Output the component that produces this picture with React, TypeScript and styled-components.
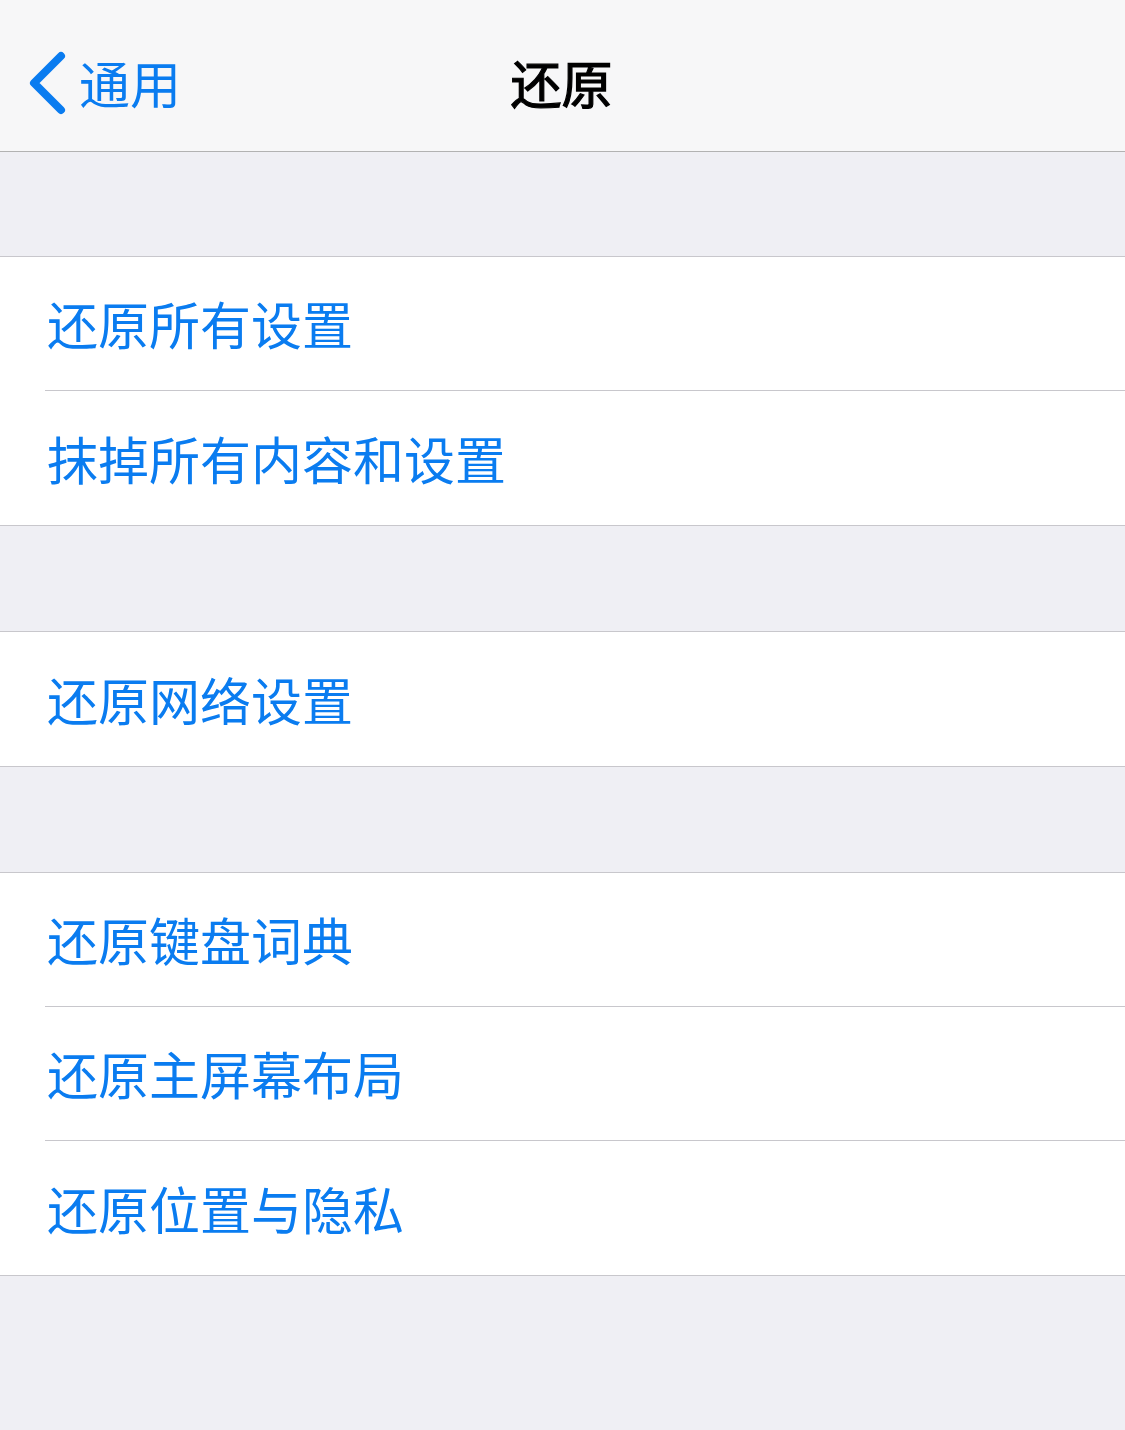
import { createGlobalStyle, styled } from 'styled-components'

const GlobalStyle = createGlobalStyle`
  html, body {
    margin: 0;
    padding: 0;
    background: #efeff4;
  }
  body {
    font-family: "Noto Sans CJK SC", "Noto Sans", sans-serif;
    -webkit-font-smoothing: antialiased;
  }
`

const Page = styled.div`
  width: 1125px;
  min-height: 1430px;
  background: #efeff4;
`

const NavBar = styled.div`
  box-sizing: border-box;
  height: 152px;
  padding-top: 14px;
  background: #f7f7f8;
  border-bottom: 1px solid #b2b2b2;
  display: grid;
  grid-template-columns: 1fr auto 1fr;
  align-items: center;
`

const BackButton = styled.div`
  display: flex;
  align-items: center;
  gap: 13px;
  padding-left: 26px;
  color: #0a7cf0;
  font-size: 51px;
  line-height: 1;
  svg {
    display: block;
  }
`

const Title = styled.div`
  font-size: 51px;
  font-weight: 400;
  color: #000;
  line-height: 1;
  padding-right: 2px;
  -webkit-text-stroke: 1.2px #000;
`

const Gap = styled.div<{ $first?: boolean }>`
  height: ${p => (p.$first ? '104px' : '105px')};
`

const Group = styled.div`
  background: #fff;
  border-top: 1px solid #c8c7cc;
  border-bottom: 1px solid #c8c7cc;
`

const Row = styled.div<{ $last?: boolean }>`
  box-sizing: border-box;
  height: 134px;
  margin-left: 45px;
  padding-left: 2px;
  display: flex;
  align-items: center;
  border-bottom: ${p => (p.$last ? 'none' : '1px solid #c8c7cc')};
  color: #0a7cf0;
  font-size: 51px;
  line-height: 1;
`

const groups = [
  ['还原所有设置', '抹掉所有内容和设置'],
  ['还原网络设置'],
  ['还原键盘词典', '还原主屏幕布局', '还原位置与隐私'],
]

export default function App() {
  return (
    <Page>
      <GlobalStyle />
      <NavBar>
        <BackButton>
          <svg width="40" height="66" viewBox="0 0 40 66">
            <path d="M35 6 L8 33 L35 60" fill="none" stroke="#0a7cf0" strokeWidth="8" strokeLinecap="round" strokeLinejoin="round" />
          </svg>
          <span>通用</span>
        </BackButton>
        <Title>还原</Title>
        <div />
      </NavBar>
      {groups.map((g, gi) => (
        <div key={gi}>
          <Gap $first={gi === 0} />
          <Group>
            {g.map((t, i) => (
              <Row key={t} $last={i === g.length - 1}>{t}</Row>
            ))}
          </Group>
        </div>
      ))}
    </Page>
  )
}
